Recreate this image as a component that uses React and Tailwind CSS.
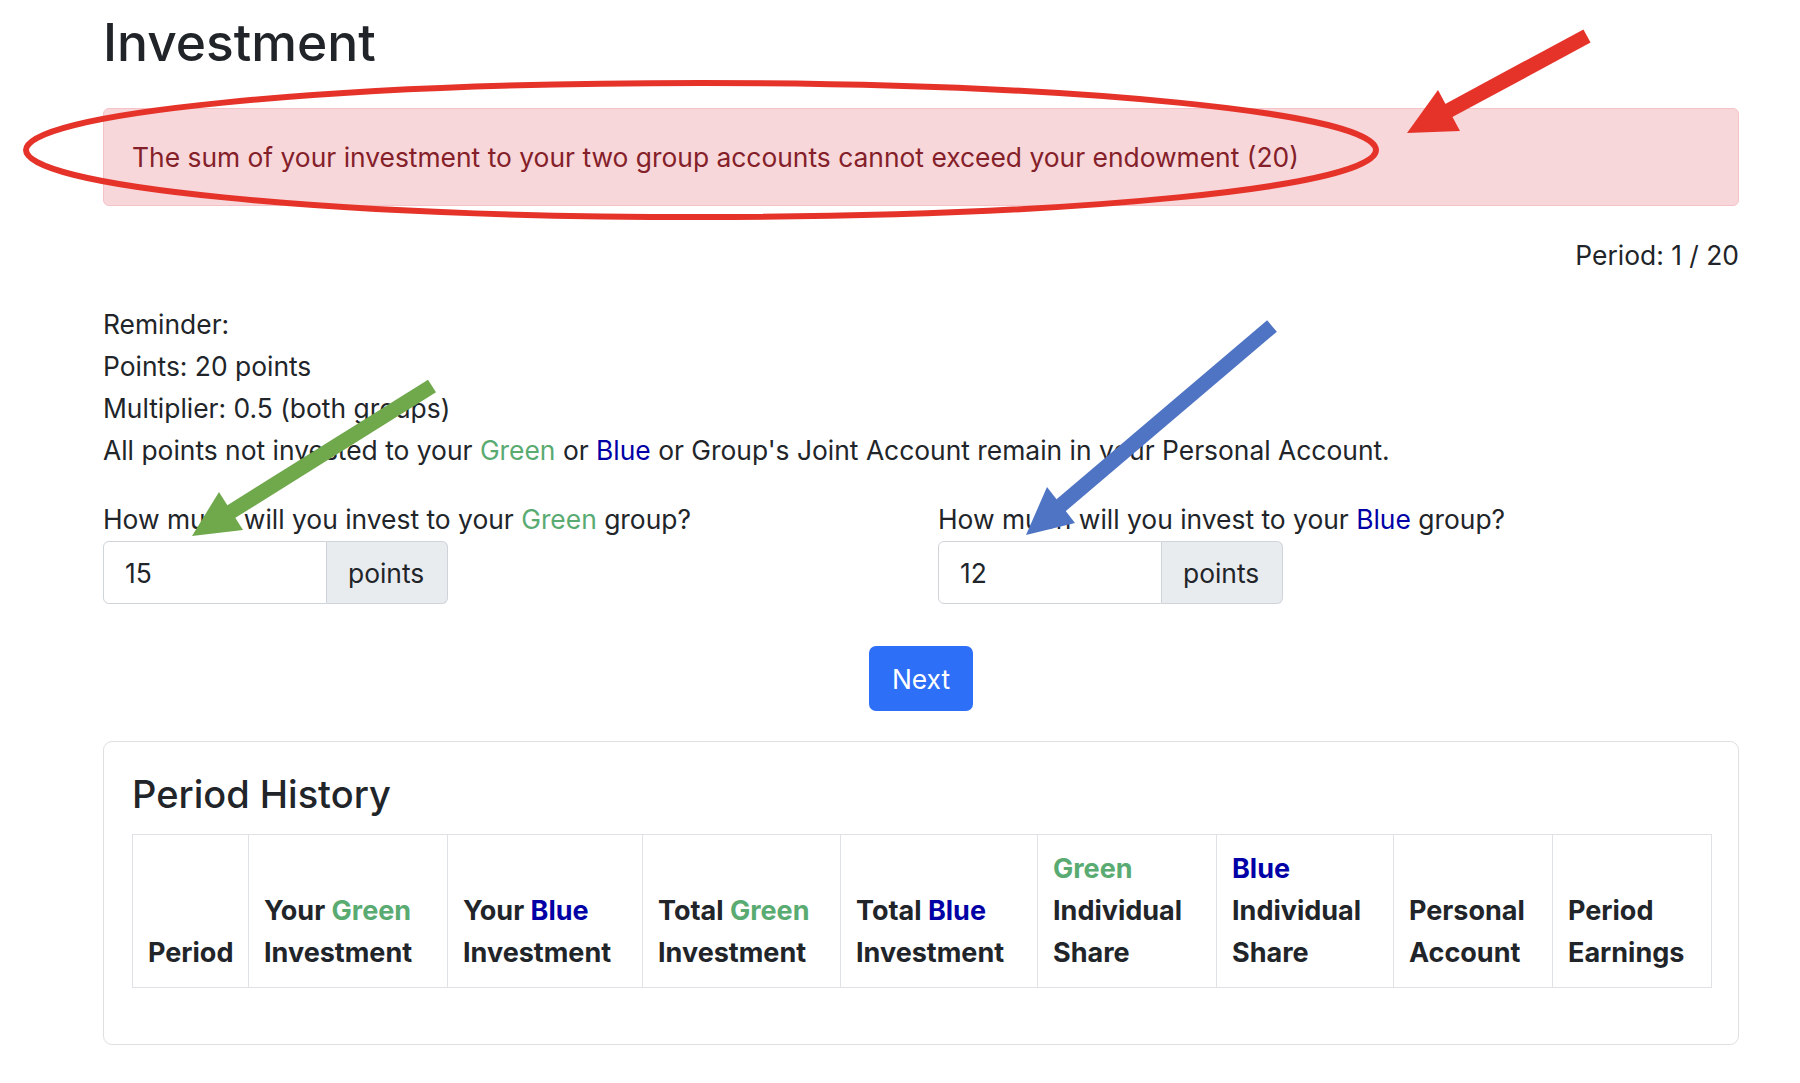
import React from 'react'

const GREEN = 'text-[#5aab72]'
const BLUE = 'text-[#0000a6]'

function Green({ children = 'Green' }) {
  return <span className={GREEN}>{children}</span>
}

function Blue({ children = 'Blue' }) {
  return <span className={BLUE}>{children}</span>
}

// annotation arrows drawn over the screenshot
const ARROWS = [
  { color: '#e5332a', tail: [1587, 36], neck: [1446, 112], tip: [1407, 133], c1: [1438, 90], c2: [1460, 131] },
  { color: '#70a84c', tail: [432, 386], neck: [229, 513], tip: [192, 536], c1: [219, 492], c2: [243, 530] },
  { color: '#4f74c4', tail: [1272, 326], neck: [1059, 507], tip: [1026, 535], c1: [1047, 487], c2: [1075, 523] },
]

function Arrow({ color, tail, neck, tip, c1, c2 }) {
  return (
    <g>
      <line x1={tail[0]} y1={tail[1]} x2={neck[0]} y2={neck[1]} stroke={color} strokeWidth="15" />
      <polygon points={`${tip[0]},${tip[1]} ${c1[0]},${c1[1]} ${c2[0]},${c2[1]}`} fill={color} />
    </g>
  )
}

function PointsInput({ value }) {
  return (
    <div className="mt-[1px] flex h-[63px]">
      <div className="w-[224px] border border-[#ced4da] rounded-l-[6px] px-[21px] flex items-center bg-white">
        {value}
      </div>
      <div className="w-[121px] border border-l-0 border-[#ced4da] bg-[#e9ecef] rounded-r-[6px] px-[21px] flex items-center">
        points
      </div>
    </div>
  )
}

const COLS = [
  { w: 'w-[116px]', lines: ['Period'] },
  { w: 'w-[199px]', lines: [<>Your <Green /></>, 'Investment'] },
  { w: 'w-[195px]', lines: [<>Your <Blue /></>, 'Investment'] },
  { w: 'w-[198px]', lines: [<>Total <Green /></>, 'Investment'] },
  { w: 'w-[197px]', lines: [<>Total <Blue /></>, 'Investment'] },
  { w: 'w-[179px]', lines: [<Green />, 'Individual', 'Share'] },
  { w: 'w-[177px]', lines: [<Blue />, 'Individual', 'Share'] },
  { w: 'w-[159px]', lines: ['Personal', 'Account'] },
  { w: 'w-[159px]', lines: ['Period', 'Earnings'] },
]

export default function App() {
  return (
    <div className="relative w-[1800px] h-[1083px] overflow-hidden bg-white text-[#212529] font-['Inter','Noto_Sans',sans-serif] text-[26.4px] leading-[42px]">
      <div className="ml-[103px] w-[1636px]">
        {/* Title */}
        <h1 className="pt-[10px] text-[51.5px] leading-[64px] font-medium">Investment</h1>

        {/* Error alert */}
        <div className="mt-[34px] border border-[#f5c2c7] bg-[#f8d7da] text-[#842029] rounded-[6px] px-[28px] py-[27px]">
          The sum of your investment to your two group accounts cannot exceed your endowment (20)
        </div>

        <div className="mt-[28px] text-right">Period: 1 / 20</div>

        {/* Reminder */}
        <div className="mt-[27px]">
          <div>Reminder:</div>
          <div>Points: 20 points</div>
          <div>Multiplier: 0.5 (both groups)</div>
          <div>
            All points not invested to your <Green /> or <Blue /> or Group's Joint Account remain in your Personal Account.
          </div>
        </div>

        {/* Inputs */}
        <div className="mt-[27px] grid grid-cols-2 gap-x-[34px]">
          <div>
            <div>How much will you invest to your <Green /> group?</div>
            <PointsInput value="15" />
          </div>
          <div>
            <div>How much will you invest to your <Blue /> group?</div>
            <PointsInput value="12" />
          </div>
        </div>

        <div className="mt-[42px] flex justify-center">
          <button className="w-[104px] h-[65px] bg-[#2d6ff7] text-white rounded-[7px]">Next</button>
        </div>

        {/* History card */}
        <div className="mt-[30px] border border-[#dfdfdf] rounded-[9px] p-[28px]">
          <h3 className="text-[38px] leading-[48px] font-medium">Period History</h3>
          <table className="mt-[16px] mb-[28px] w-full table-fixed border-collapse text-[27px]">
            <colgroup>
              {COLS.map((c, i) => <col key={i} className={c.w} />)}
            </colgroup>
            <thead>
              <tr>
                {COLS.map((c, i) => (
                  <th key={i} className="border border-[#dee2e6] px-[15px] py-[13px] align-bottom text-left font-bold">
                    {c.lines.map((l, j) => <div key={j}>{l}</div>)}
                  </th>
                ))}
              </tr>
            </thead>
          </table>
        </div>
      </div>

      {/* Annotations */}
      <svg className="absolute left-0 top-0 pointer-events-none" width="1800" height="1083" viewBox="0 0 1800 1083">
        <ellipse cx="701" cy="150" rx="675" ry="67" fill="none" stroke="#e5332a" strokeWidth="6" />
        {ARROWS.map((a, i) => <Arrow key={i} {...a} />)}
      </svg>
    </div>
  )
}
